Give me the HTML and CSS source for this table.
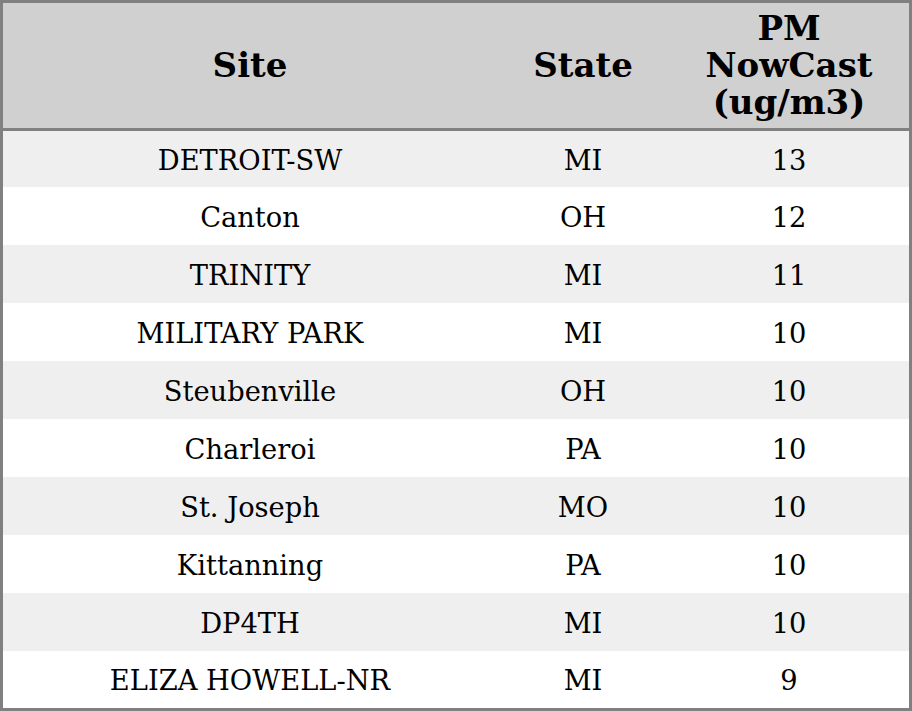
FILE: index.html
```html
<!DOCTYPE html>
<html>
<head>
<meta charset="utf-8">
<link rel="stylesheet" href="styles.css">
</head>
<body>
<table class="aq">
  <thead>
    <tr class="head"><th class="c-site">Site</th><th class="c-state">State</th><th class="c-pm">PM<br>NowCast<br>(ug/m3)</th></tr>
  </thead>
  <tbody>
    <tr><td>DETROIT-SW</td><td>MI</td><td>13</td></tr>
    <tr><td>Canton</td><td>OH</td><td>12</td></tr>
    <tr><td>TRINITY</td><td>MI</td><td>11</td></tr>
    <tr><td>MILITARY PARK</td><td>MI</td><td>10</td></tr>
    <tr><td>Steubenville</td><td>OH</td><td>10</td></tr>
    <tr><td>Charleroi</td><td>PA</td><td>10</td></tr>
    <tr><td>St. Joseph</td><td>MO</td><td>10</td></tr>
    <tr><td>Kittanning</td><td>PA</td><td>10</td></tr>
    <tr><td>DP4TH</td><td>MI</td><td>10</td></tr>
    <tr><td>ELIZA HOWELL-NR</td><td>MI</td><td>9</td></tr>
  </tbody>
</table>
</body>
</html>
```
FILE: styles.css
```css
html, body { margin: 0; padding: 0; background: #ffffff; }
.aq {
  width: 912px;
  border-collapse: separate;
  border-spacing: 0;
  border: 3px solid #808080;
  font-family: "DejaVu Serif", serif;
  color: #000;
  table-layout: fixed;
}
.aq th {
  background: #d0d0d0;
  font-size: 34px;
  font-weight: bold;
  line-height: 37px;
  height: 125px;
  padding: 0;
  text-align: center;
  vertical-align: middle;
  border-bottom: 3px solid #808080;
}
.c-site { width: 494px; }
.c-state { width: 172px; }
.c-pm { width: 240px; }
.aq td {
  font-size: 27.3px;
  text-align: center;
  vertical-align: middle;
  padding: 2px 0 0 0;
  height: 56px;
}
.aq tbody tr:nth-child(odd) td { background: #efefef; }
.aq tbody tr:first-child td { height: 54px; }
.aq tbody tr:last-child td { height: 55px; }
```
